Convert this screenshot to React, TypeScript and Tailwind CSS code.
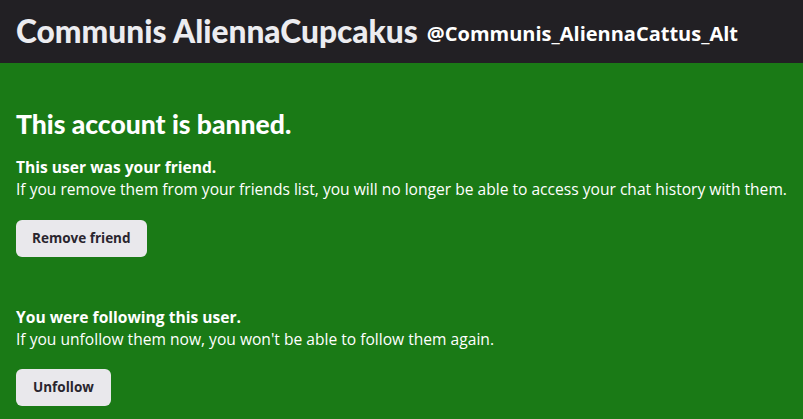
export default function App() {
  return (
    <div className="min-h-[419px] bg-[#1a7a16] font-['Open_Sans',sans-serif] text-white">
      <header className="flex h-[63px] items-center gap-[9px] bg-[#222024] px-4">
        <h1 className="font-['Lato',sans-serif] text-[31.7px] font-black text-[#ececf0]">
          Communis AliennaCupcakus
        </h1>
        <span className="pt-1 text-[20px] font-bold">@Communis_AliennaCattus_Alt</span>
      </header>

      <main className="px-4 pt-[45px]">
        <h2 className="font-['Lato',sans-serif] text-[26.5px] font-black leading-[32px]">
          This account is banned.
        </h2>

        <section className="mt-[16px]">
          <p className="text-[15.6px] font-bold leading-[22px]">This user was your friend.</p>
          <p className="text-[15.6px] leading-[22px]">
            If you remove them from your friends list, you will no longer be able to access your chat history with them.
          </p>
          <button className="mt-[20px] h-[37px] rounded-md bg-[#e9e8ec] px-[16px] text-[13.5px] font-bold text-[#29252e]">
            Remove friend
          </button>
        </section>

        <section className="mt-[49px]">
          <p className="text-[15.6px] font-bold leading-[22px]">You were following this user.</p>
          <p className="text-[15.6px] leading-[22px]">
            If you unfollow them now, you won't be able to follow them again.
          </p>
          <button className="mt-[19px] h-[37px] rounded-md bg-[#e9e8ec] px-[17px] text-[13.5px] font-bold text-[#29252e]">
            Unfollow
          </button>
        </section>
      </main>
    </div>
  );
}
